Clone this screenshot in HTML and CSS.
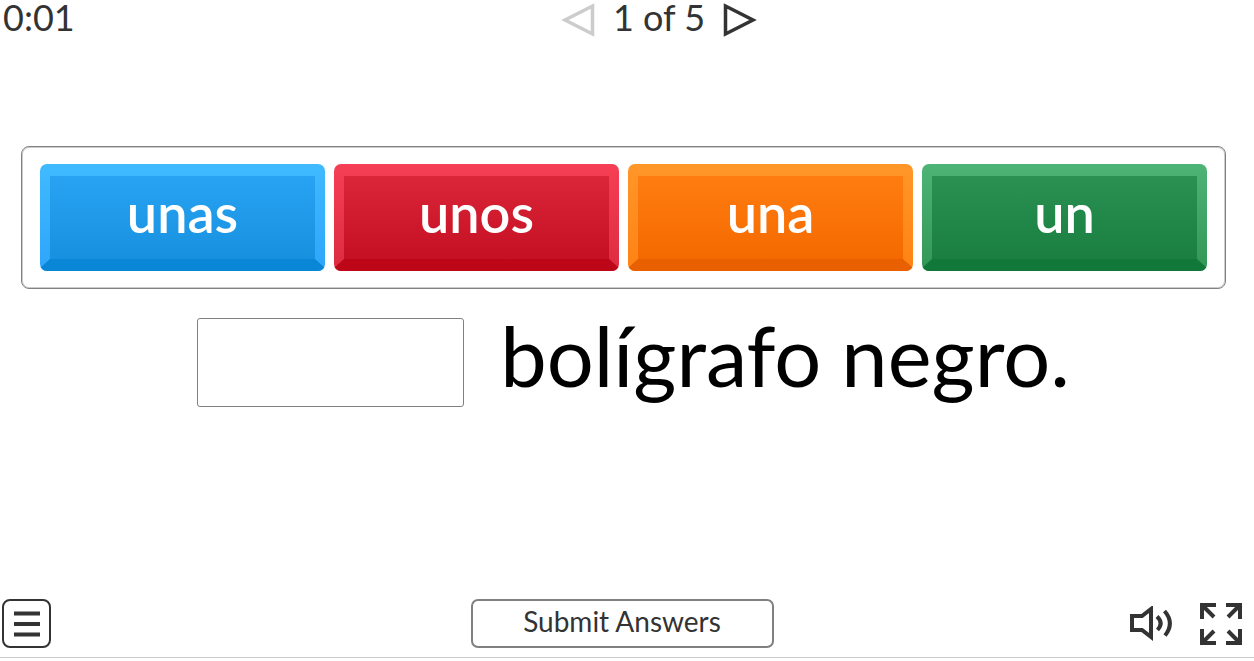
FILE: index.html
```html
<!DOCTYPE html>
<html lang="es">
<head>
    <meta charset="UTF-8">
    <meta name="viewport" content="width=device-width, initial-scale=1.0">
    <title>Artículos</title>
    <link rel="stylesheet" href="styles.css">
</head>
<body>
    <header class="top-bar">
        <span class="timer">0:01</span>
        <nav class="pager">
            <button class="icon-button" type="button" aria-label="Previous" disabled>
                <svg width="34" height="34" viewBox="0 0 34 34"><path d="M31.500 3V31L4 17Z" fill="none" stroke="#ccc" stroke-width="3.500"/></svg>
            </button>
            <span class="page-count">1 of 5</span>
            <button class="icon-button" type="button" aria-label="Next">
                <svg width="34" height="34" viewBox="0 0 34 34"><path d="M2.500 3V31L30 17Z" fill="none" stroke="#333" stroke-width="3.500"/></svg>
            </button>
        </nav>
    </header>

    <main class="activity">
        <div class="word-bank">
            <button class="tile blue" type="button">unas</button>
            <button class="tile red" type="button">unos</button>
            <button class="tile orange" type="button">una</button>
            <button class="tile green" type="button">un</button>
        </div>

        <div class="sentence">
            <input class="blank" type="text" aria-label="Answer" readonly>
            <div class="words">
                <span>bolígrafo</span>
                <span>negro.</span>
            </div>
        </div>
    </main>

    <footer class="bottom-bar">
        <button class="menu-button" type="button" aria-label="Menu">
            <svg width="26" height="26" viewBox="0 0 26 26"><path d="M0 2.500H26M0 13H26M0 23.500H26" stroke="#333" stroke-width="4"/></svg>
        </button>
        <button class="submit-button" type="button">Submit Answers</button>
        <div class="tools">
            <button class="icon-button" type="button" aria-label="Sound">
                <svg width="42" height="36" viewBox="0 0 42 36" fill="none" stroke="#333" stroke-width="4">
                    <path d="M2 10H12L21 3V31L12 24H2Z"/>
                    <path d="M27 10.500Q34 17 27.500 24M34.500 5Q45 17 35 29.500"/>
                </svg>
            </button>
            <button class="icon-button" type="button" aria-label="Full screen">
                <svg width="42" height="42" viewBox="0 0 42 42" fill="none" stroke="#333" stroke-width="4">
                    <path d="M16 2H2V16M2 2L14 14"/>
                    <path d="M26 2H40V16M40 2L28 14"/>
                    <path d="M2 26V40H16M2 40L14 28"/>
                    <path d="M40 26V40H26M40 40L28 28"/>
                </svg>
            </button>
        </div>
    </footer>
</body>
</html>
```
FILE: styles.css
```css
* {
    box-sizing: border-box;
}

body {
    margin: 0;
    min-height: 100vh;
    padding-bottom: 3px;
    display: flex;
    flex-direction: column;
    font-family: Lato, sans-serif;
    background: #fff;
    color: #333;
}

button {
    font-family: inherit;
    cursor: pointer;
}

svg {
    display: block;
}

.icon-button {
    padding: 0;
    border: none;
    background: none;
}

.top-bar,
.bottom-bar {
    display: grid;
    grid-template-columns: 1fr auto 1fr;
    align-items: center;
}

/* Timer and page navigation */
.top-bar {
    align-items: start;
    padding: 1px 3px 0;
    font-size: 36px;
    line-height: 32px;
}

.pager {
    grid-column: 2;
    display: flex;
    align-items: center;
    gap: 18px;
    padding-left: 64px;
}

.page-count {
    padding-bottom: 6px;
}

/* Word tiles */
.activity {
    flex: 1;
    padding: 107px 28px 0 21px;
}

.word-bank {
    display: grid;
    grid-template-columns: repeat(4, 1fr);
    gap: 9px;
    padding: 17px 18px;
    border: 1px solid #808080;
    border-radius: 8px;
    box-shadow: inset 0 0 0 1px #ccc;
}

.tile {
    position: relative;
    height: 107px;
    padding: 0 0 10px;
    border: solid transparent;
    border-width: 12px 10px;
    border-radius: 7px;
    background:
        linear-gradient(var(--face-top), var(--face-bottom)) padding-box,
        linear-gradient(var(--edge-top), var(--edge-bottom)) border-box;
    color: #fff;
    font-size: 54px;
    font-weight: 600;
    line-height: 64px;
}

/* Dark lower edge of the bevel */
.tile::after {
    content: "";
    position: absolute;
    right: -10px;
    bottom: -12px;
    left: -10px;
    height: 12px;
    border-radius: 0 0 7px 7px;
    background: var(--base);
    clip-path: polygon(10px 0, calc(100% - 10px) 0, 100% 9px, 100% 100%, 0 100%, 0 9px);
}

.blue {
    --edge-top: #40baff;
    --edge-bottom: #2ea5fa;
    --face-top: #28a3f3;
    --face-bottom: #1791df;
    --base: #0986d6;
}

.red {
    --edge-top: #f63f54;
    --edge-bottom: #dc2b40;
    --face-top: #da2638;
    --face-bottom: #c41022;
    --base: #bd0719;
}

.orange {
    --edge-top: #ff9728;
    --edge-bottom: #ff8214;
    --face-top: #ff7d10;
    --face-bottom: #f46a00;
    --base: #e86000;
}

.green {
    --edge-top: #4eb475;
    --edge-bottom: #329657;
    --face-top: #2a9152;
    --face-bottom: #1a7f40;
    --base: #117839;
}

/* Sentence with the gap to fill */
.sentence {
    display: flex;
    justify-content: center;
    gap: 36px;
    padding: 29px 0 0 20px;
}

.blank {
    width: 267px;
    height: 89px;
    border: 1px solid #808080;
    border-radius: 3px;
}

.words {
    display: flex;
    gap: 20px;
    color: #000;
    font-size: 83px;
    line-height: 74px;
}

/* Bottom controls */
.bottom-bar {
    padding: 0 12px 9px 2px;
    border-bottom: 1px solid #ccc;
}

.menu-button {
    display: flex;
    align-items: center;
    justify-content: center;
    width: 49px;
    height: 49px;
    padding: 0;
    border: 2px solid #333;
    border-radius: 8px;
    background: #fff;
}

.submit-button {
    width: 303px;
    height: 49px;
    padding: 0 0 6px;
    border: 2px solid #808080;
    border-radius: 7px;
    background: #fff;
    color: #333;
    font-size: 28px;
}

.tools {
    display: flex;
    align-items: center;
    justify-content: flex-end;
    gap: 28px;
}
```
